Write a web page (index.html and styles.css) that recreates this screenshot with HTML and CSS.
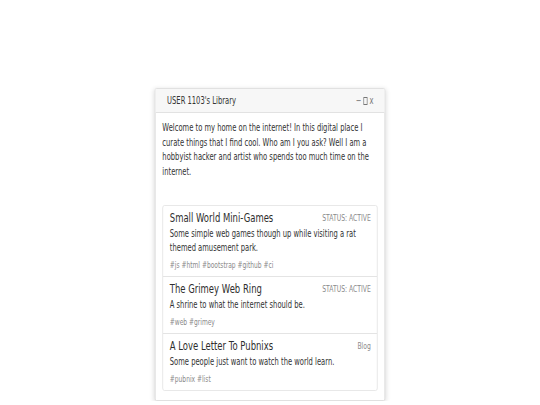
FILE: index.html
```html
<!DOCTYPE html>
<html>
<head>
<meta charset="utf-8">
<link rel="stylesheet" href="styles.css">
</head>
<body>
<div class="window">
  <div class="titlebar">
    <span class="title">USER 1103's Library</span>
    <span class="controls"><span class="ctl">−</span><span class="box"></span><span class="ctl">x</span></span>
  </div>
  <div class="content">
    <p class="intro">Welcome to my home on the internet! In this digital place I curate things that I find cool. Who am I you ask? Well I am a hobbyist hacker and artist who spends too much time on the internet.</p>
    <div class="list">
      <div class="item">
        <div class="item-head"><span class="item-title">Small World Mini-Games</span><span class="meta">STATUS: ACTIVE</span></div>
        <div class="desc">Some simple web games though up while visiting a rat themed amusement park.</div>
        <div class="tags">#js #html #bootstrap #github #ci</div>
      </div>
      <div class="item">
        <div class="item-head"><span class="item-title">The Grimey Web Ring</span><span class="meta">STATUS: ACTIVE</span></div>
        <div class="desc">A shrine to what the internet should be.</div>
        <div class="tags">#web #grimey</div>
      </div>
      <div class="item">
        <div class="item-head"><span class="item-title">A Love Letter To Pubnixs</span><span class="meta">Blog</span></div>
        <div class="desc">Some people just want to watch the world learn.</div>
        <div class="tags">#pubnix #list</div>
      </div>
    </div>
  </div>
</div>
</body>
</html>
```
FILE: styles.css
```css
html, body {
  margin: 0;
  background: #ffffff;
}
body {
  display: flex;
  justify-content: center;
  padding-top: 88px;
  font-family: "DejaVu Sans", Verdana, sans-serif;
  color: #333;
}
.window {
  width: 338px;
  flex: none;
  background: #fff;
  border: 1px solid #dcdcdc;
  border-radius: 2px;
  box-shadow: 0 1px 6px rgba(0,0,0,0.14);
  transform: scaleX(0.677);
  transform-origin: top center;
}
.titlebar {
  height: 23px;
  display: flex;
  align-items: center;
  justify-content: space-between;
  padding: 0 16px 0 17px;
  background: #f7f7f7;
  border-bottom: 1px solid #e2e2e2;
  font-size: 10px;
  color: #333;
}
.controls {
  display: flex;
  align-items: center;
  gap: 3px;
  color: #777;
  font-size: 10px;
}
.box {
  width: 6px;
  height: 8px;
  border: 1px solid #777;
  box-sizing: border-box;
}
.content {
  padding: 8px 10px 9px 10px;
}
.intro {
  margin: 0 0 26px 0;
  font-size: 10px;
  line-height: 14.5px;
  color: #333;
}
.list {
  border: 1px solid #e4e4e4;
  border-radius: 3px;
}
.item {
  padding: 5px 9px 5px 10px;
}
.item + .item {
  border-top: 1px solid #e4e4e4;
}
.item-head {
  display: flex;
  justify-content: space-between;
  align-items: center;
  height: 13px;
}
.item-title {
  font-size: 12.5px;
  line-height: 13px;
  color: #2e2e2e;
}
.meta {
  font-size: 9px;
  color: #8a8a8a;
}
.desc {
  margin-top: 3px;
  font-size: 10px;
  line-height: 14px;
  color: #333;
}
.tags {
  margin-top: 4px;
  font-size: 8.8px;
  line-height: 12px;
  color: #8a8a8a;
}
```
